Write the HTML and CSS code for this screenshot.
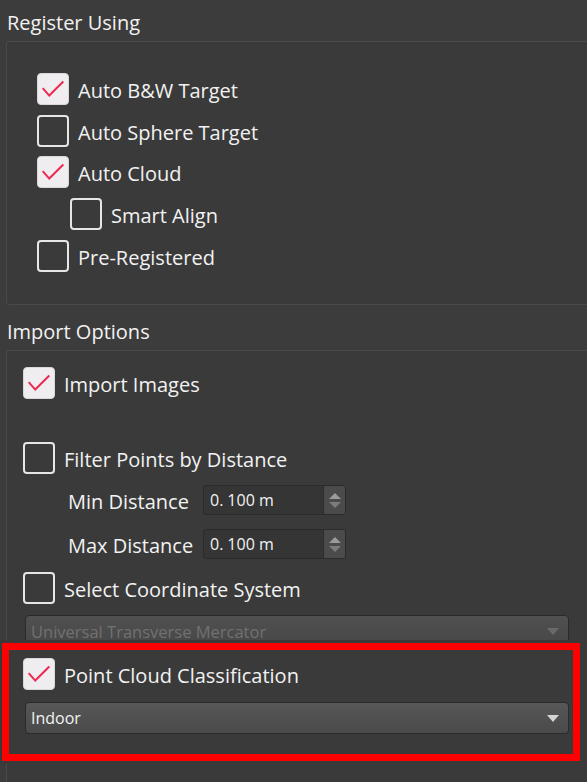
FILE: index.html
```html
<!DOCTYPE html>
<html>
<head>
<meta charset="utf-8">
<link rel="stylesheet" href="styles.css">
</head>
<body>
<div class="panel">
  <div class="title t1">Register Using</div>
  <div class="group g1">
    <div class="row"><span class="cb checked"><svg viewBox="0 0 32 32"><polyline points="5,15 12,23 27,8"/></svg></span><span class="lbl">Auto B&amp;W Target</span></div>
    <div class="row"><span class="cb"></span><span class="lbl">Auto Sphere Target</span></div>
    <div class="row"><span class="cb checked"><svg viewBox="0 0 32 32"><polyline points="5,15 12,23 27,8"/></svg></span><span class="lbl">Auto Cloud</span></div>
    <div class="row sub"><span class="cb"></span><span class="lbl">Smart Align</span></div>
    <div class="row"><span class="cb"></span><span class="lbl">Pre-Registered</span></div>
  </div>
  <div class="title t2">Import Options</div>
  <div class="group g2">
    <div class="row2 r-import"><span class="cb checked"><svg viewBox="0 0 32 32"><polyline points="5,15 12,23 27,8"/></svg></span><span class="lbl">Import Images</span></div>
    <div class="row2 r-filter"><span class="cb"></span><span class="lbl">Filter Points by Distance</span></div>
    <div class="field r-min"><span class="flabel">Min Distance</span>
      <div class="spin"><span class="val">0.<span class="gap"></span>100 m</span><span class="btns"><span class="up"></span><span class="dn"></span></span></div>
    </div>
    <div class="field r-max"><span class="flabel">Max Distance</span>
      <div class="spin"><span class="val">0.<span class="gap"></span>100 m</span><span class="btns"><span class="up"></span><span class="dn"></span></span></div>
    </div>
    <div class="row2 r-coord"><span class="cb"></span><span class="lbl">Select Coordinate System</span></div>
    <div class="combo disabled r-utm"><span>Universal Transverse Mercator</span><span class="arrow"></span></div>
    <div class="row2 r-pcc"><span class="cb checked"><svg viewBox="0 0 32 32"><polyline points="5,15 12,23 27,8"/></svg></span><span class="lbl">Point Cloud Classification</span></div>
    <div class="combo r-indoor"><span>Indoor</span><span class="arrow"></span></div>
  </div>
  <div class="highlight"></div>
</div>
</body>
</html>
```
FILE: styles.css
```css
html, body {
  margin: 0;
  padding: 0;
  background: #3c3c3c;
  width: 587px;
  height: 782px;
  overflow: hidden;
}
.panel {
  position: relative;
  width: 587px;
  height: 782px;
  font-family: "Open Sans", "Noto Sans", sans-serif;
  font-size: 20px;
  color: #f2f2f2;
}
.title {
  padding-left: 7px;
  display: flex;
  align-items: center;
  box-sizing: border-box;
}
.t1 { height: 41px; padding-top: 3px; }
.t2 { height: 45px; padding-top: 7px; }
.group {
  margin-left: 6px;
  width: 581px;
  border: 1px solid #4a4a4a;
  border-right: none;
  border-radius: 4px 0 0 4px;
  background: #3a3a3a;
  box-sizing: border-box;
}
.g1 {
  height: 264px;
  padding: 26px 0 0 30px;
}
.g2 {
  height: 460px;
  padding: 16px 0 0 16px;
}
.row {
  height: 41.75px;
  display: flex;
  align-items: center;
  gap: 9px;
}
.row.sub { padding-left: 33px; }
.row2 {
  height: 32px;
  display: flex;
  align-items: center;
  gap: 9px;
}
.lbl { padding-top: 3px; }
.cb {
  width: 32px;
  height: 32px;
  box-sizing: border-box;
  border: 2px solid #e6e6e6;
  border-radius: 4px;
  flex: none;
  display: block;
}
.cb.checked {
  background: #efedef;
  border: 1px solid #d8d8d8;
}
.cb svg {
  width: 30px;
  height: 30px;
  display: block;
}
.cb polyline {
  fill: none;
  stroke: #ec2b53;
  stroke-width: 2.2;
  stroke-linejoin: miter;
}
.r-filter { margin-top: 43px; }
.field {
  display: flex;
  align-items: center;
  height: 30px;
  padding-left: 45px;
}
.flabel { width: 135px; flex: none; padding-top: 3px; }
.r-min { margin-top: 11px; }
.r-max { margin-top: 14px; }
.spin {
  width: 143px;
  height: 30px;
  box-sizing: border-box;
  border: 1px solid #2c2c2c;
  border-radius: 3px;
  background: #353535;
  display: flex;
  align-items: center;
  justify-content: space-between;
  padding-left: 6px;
  font-size: 16px;
}
.gap { display: inline-block; width: 4px; }
.btns {
  width: 21px;
  height: 28px;
  background: #4b4b4b;
  border-left: 1px solid #2c2c2c;
  border-radius: 0 2px 2px 0;
  display: flex;
  flex-direction: column;
  align-items: center;
  justify-content: center;
  gap: 3px;
}
.up {
  width: 0; height: 0;
  border-left: 6px solid transparent;
  border-right: 6px solid transparent;
  border-bottom: 6px solid #9a9a9a;
}
.dn {
  width: 0; height: 0;
  border-left: 6px solid transparent;
  border-right: 6px solid transparent;
  border-top: 6px solid #7c7c7c;
}
.r-coord { margin-top: 13px; }
.combo {
  width: 544px;
  height: 32px;
  margin-left: 2px;
  box-sizing: border-box;
  border: 1px solid #2a2a2a;
  border-radius: 4px;
  background: linear-gradient(#575757, #4a4a4a);
  display: flex;
  align-items: center;
  justify-content: space-between;
  padding: 0 9px 0 5px;
  font-size: 16px;
}
.combo .arrow {
  width: 0; height: 0;
  border-left: 6px solid transparent;
  border-right: 6px solid transparent;
  border-top: 7px solid #d4d4d4;
}
.combo.disabled {
  color: #717171;
  background: linear-gradient(#505050, #474747);
  font-size: 16.5px;
}
.combo.disabled .arrow { border-top-color: #6a6a6a; }
.r-utm { margin-top: 11px; }
.r-pcc { margin-top: 11px; }
.r-indoor { margin-top: 12px; }
.highlight {
  position: absolute;
  left: 2px;
  top: 643px;
  width: 578px;
  height: 118px;
  box-sizing: border-box;
  border: 7px solid #ff0000;
  box-shadow: 0 0 0 3px #3a3a3a;
  pointer-events: none;
}
```
